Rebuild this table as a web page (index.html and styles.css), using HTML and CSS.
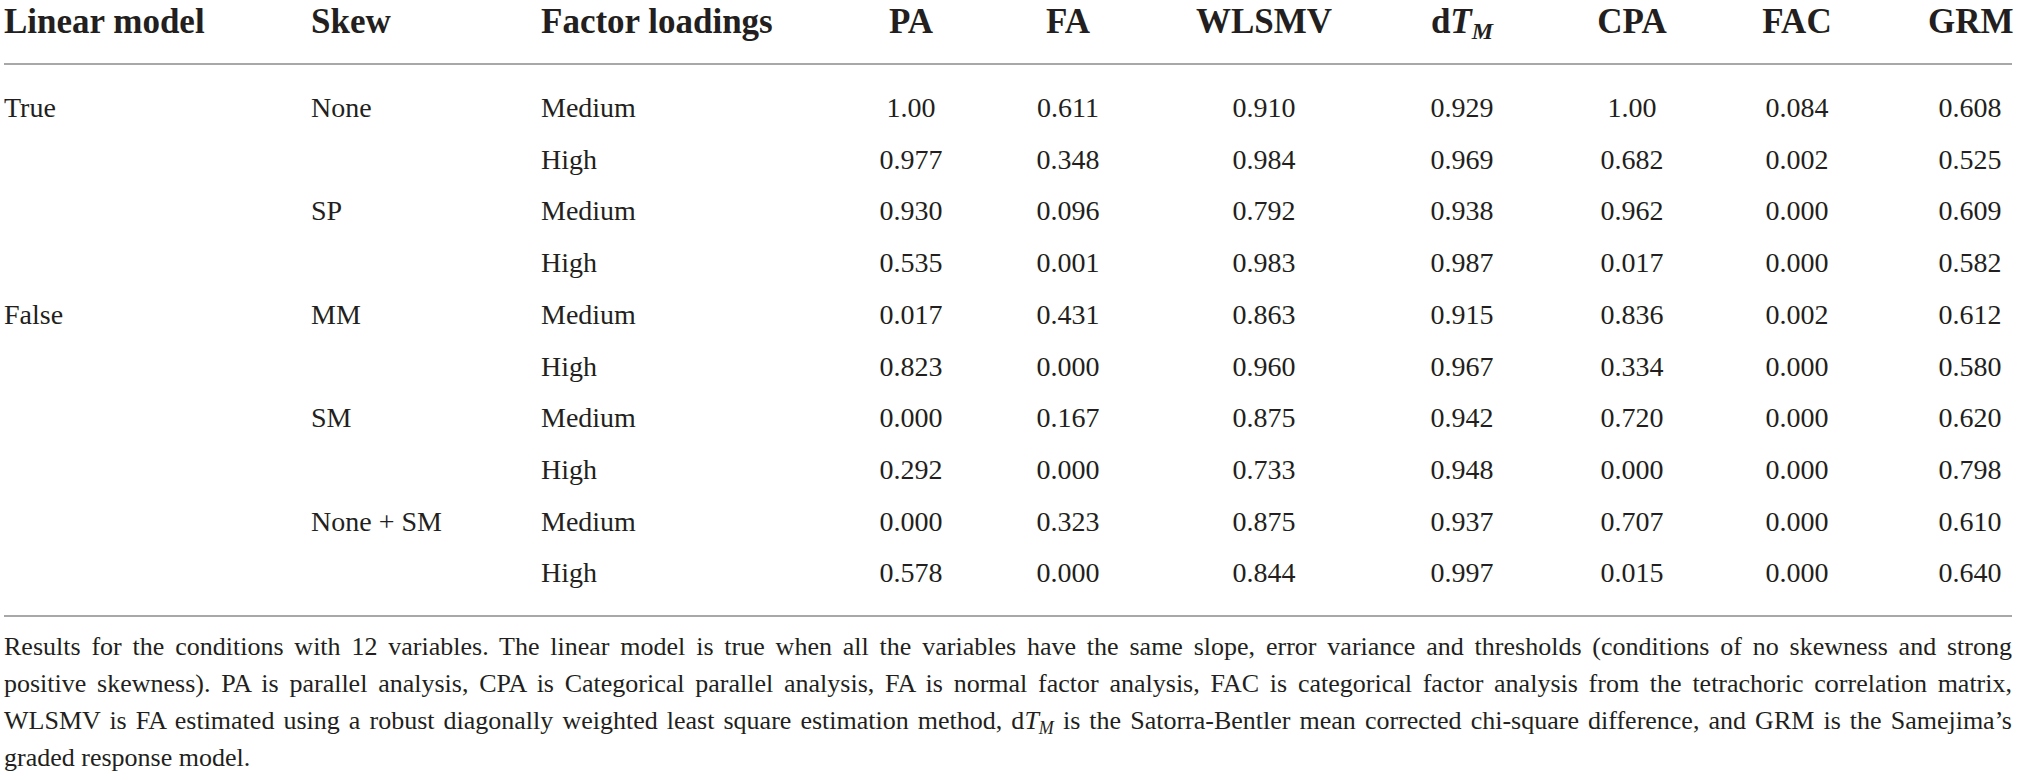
FILE: index.html
```html
<!DOCTYPE html>
<html lang="en">
<head>
<meta charset="utf-8">
<title>Table</title>
<link rel="stylesheet" href="styles.css">
</head>
<body>
<div class="table">
  <div class="thead">
    <div class="row">
      <div>Linear model</div>
      <div>Skew</div>
      <div>Factor loadings</div>
      <div>PA</div>
      <div>FA</div>
      <div>WLSMV</div>
      <div>d<i>T</i><sub><i>M</i></sub></div>
      <div>CPA</div>
      <div>FAC</div>
      <div>GRM</div>
    </div>
  </div>
  <div class="tbody">
    <div class="row"><div>True</div><div>None</div><div>Medium</div><div>1.00</div><div>0.611</div><div>0.910</div><div>0.929</div><div>1.00</div><div>0.084</div><div>0.608</div></div>
    <div class="row"><div></div><div></div><div>High</div><div>0.977</div><div>0.348</div><div>0.984</div><div>0.969</div><div>0.682</div><div>0.002</div><div>0.525</div></div>
    <div class="row"><div></div><div>SP</div><div>Medium</div><div>0.930</div><div>0.096</div><div>0.792</div><div>0.938</div><div>0.962</div><div>0.000</div><div>0.609</div></div>
    <div class="row"><div></div><div></div><div>High</div><div>0.535</div><div>0.001</div><div>0.983</div><div>0.987</div><div>0.017</div><div>0.000</div><div>0.582</div></div>
    <div class="row"><div>False</div><div>MM</div><div>Medium</div><div>0.017</div><div>0.431</div><div>0.863</div><div>0.915</div><div>0.836</div><div>0.002</div><div>0.612</div></div>
    <div class="row"><div></div><div></div><div>High</div><div>0.823</div><div>0.000</div><div>0.960</div><div>0.967</div><div>0.334</div><div>0.000</div><div>0.580</div></div>
    <div class="row"><div></div><div>SM</div><div>Medium</div><div>0.000</div><div>0.167</div><div>0.875</div><div>0.942</div><div>0.720</div><div>0.000</div><div>0.620</div></div>
    <div class="row"><div></div><div></div><div>High</div><div>0.292</div><div>0.000</div><div>0.733</div><div>0.948</div><div>0.000</div><div>0.000</div><div>0.798</div></div>
    <div class="row"><div></div><div>None + SM</div><div>Medium</div><div>0.000</div><div>0.323</div><div>0.875</div><div>0.937</div><div>0.707</div><div>0.000</div><div>0.610</div></div>
    <div class="row"><div></div><div></div><div>High</div><div>0.578</div><div>0.000</div><div>0.844</div><div>0.997</div><div>0.015</div><div>0.000</div><div>0.640</div></div>
  </div>
  <p class="note">
    <span class="line">Results for the conditions with 12 variables. The linear model is true when all the variables have the same slope, error variance and thresholds (conditions of no skewness and strong</span>
    <span class="line">positive skewness). PA is parallel analysis, CPA is Categorical parallel analysis, FA is normal factor analysis, FAC is categorical factor analysis from the tetrachoric correlation matrix,</span>
    <span class="line">WLSMV is FA estimated using a robust diagonally weighted least square estimation method, d<i>T</i><sub><i>M</i></sub> is the Satorra-Bentler mean corrected chi-square difference, and GRM is the Samejima’s</span>
    <span class="line last">graded response model.</span>
  </p>
</div>
</body>
</html>
```

FILE: styles.css
```css
html, body {
  margin: 0;
  padding: 0;
  background: #ffffff;
}

body {
  font-family: "Liberation Serif", "Times New Roman", serif;
  color: #231f20;
}

.table {
  width: 2008px;
  padding-left: 4px;
}

.row {
  display: grid;
  grid-template-columns: 307px 230px 300px 140px 17px 140px 56px 140px 58px 140px 30px 140px 25px 140px 61px 84px;
  white-space: nowrap;
}

.row > div {
  grid-row: 1;
}

.row > div:nth-child(n+4) {
  text-align: center;
}

.row > div:nth-child(4) { grid-column: 4; }
.row > div:nth-child(5) { grid-column: 6; }
.row > div:nth-child(6) { grid-column: 8; }
.row > div:nth-child(7) { grid-column: 10; }
.row > div:nth-child(8) { grid-column: 12; }
.row > div:nth-child(9) { grid-column: 14; }
.row > div:nth-child(10) { grid-column: 16; }

.thead {
  font-weight: bold;
  font-size: 35px;
  line-height: 40px;
  padding-top: 2px;
  padding-bottom: 21px;
  border-bottom: 2px solid #a8a8a8;
}

.thead sub {
  font-size: 24px;
  line-height: 0;
  vertical-align: -6px;
}

.tbody {
  font-size: 28px;
  line-height: 51.7px;
  padding-top: 17px;
  padding-bottom: 16px;
  border-bottom: 2px solid #a8a8a8;
}

.note {
  margin: 11px 0 0 0;
  font-size: 26px;
  line-height: 37px;
}

.note .line {
  display: block;
  white-space: nowrap;
  text-align: justify;
  text-align-last: justify;
}

.note .line.last {
  text-align-last: left;
}

.note sub {
  font-size: 18px;
  line-height: 0;
  vertical-align: -5px;
}
```
